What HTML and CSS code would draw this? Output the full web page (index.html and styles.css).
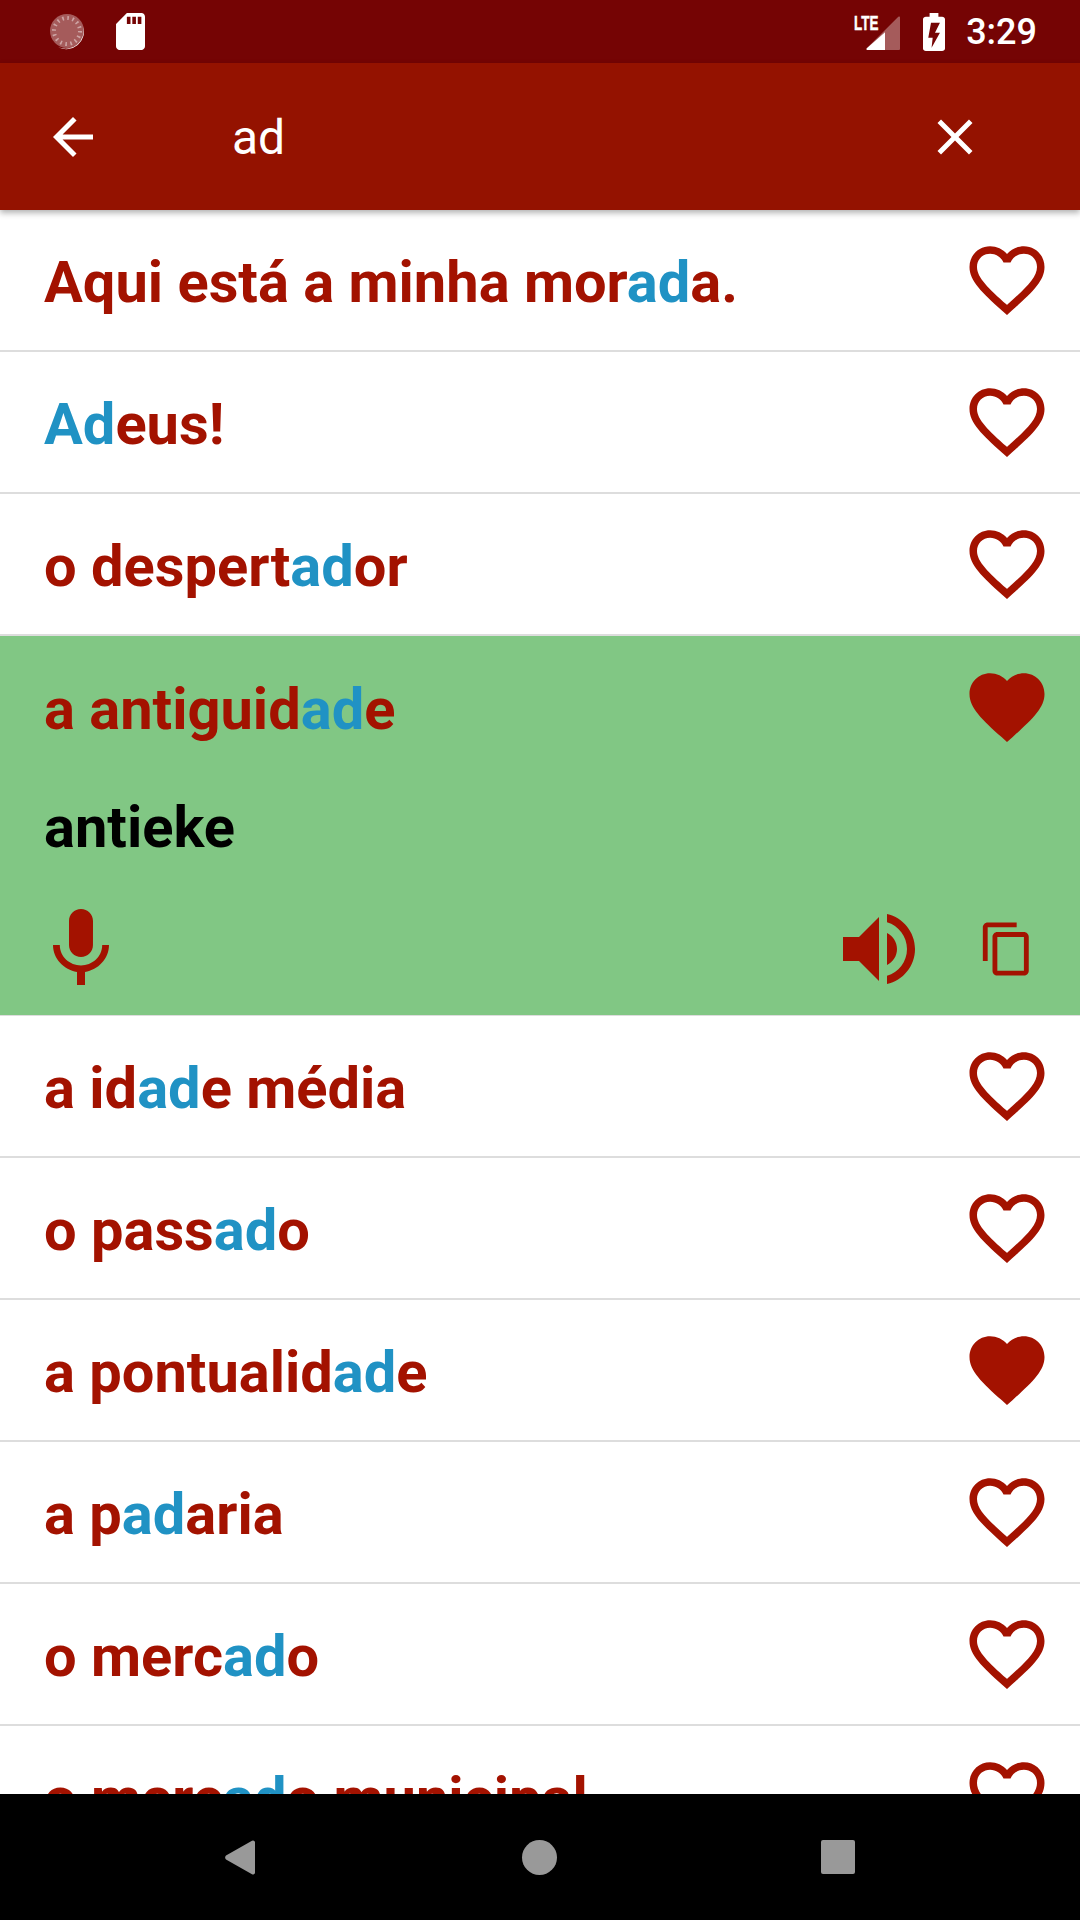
FILE: index.html
```html
<!DOCTYPE html>
<html lang="pt">
<head>
  <meta charset="UTF-8" />
  <meta name="viewport" content="width=device-width, initial-scale=1" />
  <title>Pesquisa</title>
  <link rel="stylesheet" href="styles.css">
</head>
<body>

  <!-- icones usados varias vezes -->
  <svg class="defs" aria-hidden="true">
    <symbol id="heartOutline" viewBox="0 0 24 24"><path d="M16.5 3c-1.74 0-3.41.81-4.5 2.09C10.91 3.81 9.24 3 7.5 3 4.42 3 2 5.42 2 8.5c0 3.78 3.4 6.86 8.55 11.54L12 21.35l1.45-1.32C18.6 15.36 22 12.28 22 8.5 22 5.42 19.58 3 16.5 3zm-4.4 15.55l-.1.1-.1-.1C7.14 14.24 4 11.39 4 8.5 4 6.5 5.5 5 7.5 5c1.54 0 3.04.99 3.57 2.36h1.87C13.46 5.99 14.96 5 16.5 5c2 0 3.5 1.5 3.5 3.5 0 2.89-3.14 5.74-7.9 10.05z"/></symbol>
    <symbol id="heartFull" viewBox="0 0 24 24"><path d="M12 21.35l-1.45-1.32C5.4 15.36 2 12.28 2 8.5 2 5.42 4.42 3 7.5 3c1.74 0 3.41.81 4.5 2.09C13.09 3.81 14.76 3 16.5 3 19.58 3 22 5.42 22 8.5c0 3.78-3.4 6.86-8.55 11.54L12 21.35z"/></symbol>
  </svg>

  <div class="phone">

    <!-- Barra de estado -->
    <div class="statusbar">
      <div class="status-left">
        <svg class="ic-sync" viewBox="0 0 36 36">
          <circle cx="17" cy="17" r="17" fill="#fff" fill-opacity=".35"/>
          <circle cx="17" cy="17" r="13" fill="none" stroke="#fff" stroke-opacity=".45" stroke-width="4" stroke-dasharray="1.6 3.5"/>
          <path d="M33 12a17.500 17.500 0 0 1-25 21a18 18 0 0 0 25-21z" fill="#fff"/>
        </svg>
        <svg class="ic-sd" viewBox="4 2 16 20" preserveAspectRatio="none"><path d="M18 2h-8L4.020 8 4 20c0 1.100.9 2 2 2h12c1.100 0 2-.9 2-2V4c0-1.100-.9-2-2-2zm-6 6h-2V4h2v4zm3 0h-2V4h2v4zm3 0h-2V4h2v4z"/></svg>
      </div>
      <div class="status-right">
        <div class="signal">
          <span class="lte">LTE</span>
          <svg class="ic-signal" viewBox="0 0 48 38">
            <path d="M46 4.500v31.500a1 1 0 0 1-1 1H13.500a1 1 0 0 1-.7-1.700L44.300 3.800a1 1 0 0 1 1.700.7z" fill="#fff" fill-opacity=".35"/>
            <path d="M31 19.300V37H13.500a1 1 0 0 1-.7-1.700z" fill="#fff"/>
          </svg>
        </div>
        <svg class="ic-battery" viewBox="7 2 10 20" preserveAspectRatio="none"><path fill-rule="evenodd" d="M15.670 4H14V2h-4v2H8.330C7.600 4 7 4.600 7 5.330v15.330C7 21.400 7.600 22 8.330 22h7.330c.74 0 1.340-.6 1.340-1.330V5.330C17 4.600 16.400 4 15.670 4zM10.640 7.100H14.700L12.450 12.400H14.700L10.900 20.250 11.400 15H9.400z"/></svg>
        <span class="clock">3:29</span>
      </div>
    </div>

    <!-- Barra de pesquisa -->
    <div class="toolbar">
      <svg class="ic-tool" viewBox="0 0 24 24"><path d="M20 11H7.830l5.590-5.590L12 4l-8 8 8 8 1.410-1.410L7.830 13H20v-2z"/></svg>
      <span class="query">ad</span>
      <svg class="ic-tool" viewBox="0 0 24 24"><path d="M19 6.410L17.590 5 12 10.590 6.410 5 5 6.410 10.590 12 5 17.590 6.410 19 12 13.410 17.590 19 19 17.590 13.410 12z"/></svg>
    </div>

    <!-- Lista de frases -->
    <div class="list">
      <div class="row">
        <span class="phrase">Aqui está a minha mor<span class="hit">ad</span>a.</span>
        <svg class="ic-heart"><use href="#heartOutline"/></svg>
      </div>
      <div class="row">
        <span class="phrase"><span class="hit">Ad</span>eus!</span>
        <svg class="ic-heart"><use href="#heartOutline"/></svg>
      </div>
      <div class="row">
        <span class="phrase">o despert<span class="hit">ad</span>or</span>
        <svg class="ic-heart"><use href="#heartOutline"/></svg>
      </div>

      <div class="open">
        <div class="row row-open">
          <span class="phrase">a antiguid<span class="hit">ad</span>e</span>
          <svg class="ic-heart"><use href="#heartFull"/></svg>
        </div>
        <div class="translation">antieke</div>
        <div class="actions">
          <svg class="ic-action" viewBox="0 0 24 24"><path d="M12 14c1.660 0 2.990-1.340 2.990-3L15 5c0-1.660-1.340-3-3-3S9 3.340 9 5v6c0 1.660 1.340 3 3 3zm5.300-3c0 3-2.540 5.100-5.300 5.100S6.700 14 6.700 11H5c0 3.410 2.720 6.230 6 6.720V21h2v-3.280c3.280-.48 6-3.300 6-6.720h-1.700z"/></svg>
          <svg class="ic-action ic-volume" viewBox="0 0 24 24"><path d="M3 9v6h4l5 5V4L7 9H3zm13.500 3c0-1.770-1.020-3.290-2.500-4.030v8.050c1.480-.73 2.500-2.250 2.500-4.020zM14 3.230v2.060c2.890.86 5 3.540 5 6.710s-2.110 5.850-5 6.710v2.060c4.010-.91 7-4.490 7-8.770s-2.990-7.860-7-8.770z"/></svg>
          <svg class="ic-copy" viewBox="0 0 24 24"><path d="M16 1H4c-1.100 0-2 .9-2 2v14h2V3h12V1zm3 4H8c-1.100 0-2 .9-2 2v14c0 1.100.9 2 2 2h11c1.100 0 2-.9 2-2V7c0-1.100-.9-2-2-2zm0 16H8V7h11v14z"/></svg>
        </div>
      </div>

      <div class="row">
        <span class="phrase">a id<span class="hit">ad</span>e média</span>
        <svg class="ic-heart"><use href="#heartOutline"/></svg>
      </div>
      <div class="row">
        <span class="phrase">o pass<span class="hit">ad</span>o</span>
        <svg class="ic-heart"><use href="#heartOutline"/></svg>
      </div>
      <div class="row">
        <span class="phrase">a pontualid<span class="hit">ad</span>e</span>
        <svg class="ic-heart"><use href="#heartFull"/></svg>
      </div>
      <div class="row">
        <span class="phrase">a p<span class="hit">ad</span>aria</span>
        <svg class="ic-heart"><use href="#heartOutline"/></svg>
      </div>
      <div class="row">
        <span class="phrase">o merc<span class="hit">ad</span>o</span>
        <svg class="ic-heart"><use href="#heartOutline"/></svg>
      </div>
      <div class="row">
        <span class="phrase">o merc<span class="hit">ad</span>o municipal</span>
        <svg class="ic-heart"><use href="#heartOutline"/></svg>
      </div>
    </div>

    <!-- Barra de navegacao -->
    <div class="navbar">
      <svg class="nav-back" viewBox="0 0 30 35"><path d="M27 .8a2 2 0 0 1 3 1.400v30.600a2 2 0 0 1-3 1.400L1 19.500a3 3 0 0 1 0-4z"/></svg>
      <span class="nav-home"></span>
      <span class="nav-square"></span>
    </div>

  </div>

</body>
</html>
```

FILE: styles.css
```css
* {
  box-sizing: border-box;
}

body {
  margin: 0;
  font-family: Roboto, "Liberation Sans", sans-serif;
  background: #ffffff;
}

svg {
  display: block;
  fill: currentColor;
  flex: none;
}

.defs {
  display: none;
}

.phone {
  display: flex;
  flex-direction: column;
  width: 1080px;
  height: 1920px;
  overflow: hidden;
}

/* barra de estado */
.statusbar {
  display: flex;
  justify-content: space-between;
  align-items: center;
  height: 63px;
  background: #750404;
  color: white;
  flex: none;
}

.status-left {
  display: flex;
  align-items: center;
  gap: 30px;
  padding-left: 50px;
}

.status-right {
  display: flex;
  align-items: center;
  padding-right: 43px;
}

.ic-sync {
  width: 36px;
  height: 36px;
}

.ic-sd {
  width: 29px;
  height: 37px;
}

.signal {
  position: relative;
}

.ic-signal {
  width: 48px;
  height: 38px;
}

/* LTE fica por cima do sinal */
.lte {
  position: absolute;
  left: 0;
  top: -1px;
  font-family: "Liberation Sans", sans-serif;
  font-size: 21px;
  line-height: 21px;
  font-weight: bold;
  -webkit-text-stroke: 0.5px white;
  transform: scaleX(0.64);
  transform-origin: left top;
}

.ic-battery {
  width: 22px;
  height: 38px;
  margin-left: 21px;
}

.clock {
  margin-left: 21px;
  font-size: 36px;
  font-weight: 500;
}

/* barra de pesquisa */
.toolbar {
  display: flex;
  align-items: center;
  height: 147px;
  padding: 0 95px 0 43px;
  background: #941200;
  color: white;
  box-shadow: 0 3px 6px rgba(0, 0, 0, 0.3);
  position: relative;
  flex: none;
}

.ic-tool {
  width: 60px;
  height: 60px;
}

.query {
  flex: 1;
  margin-left: 129px;
  padding-top: 2px;
  font-size: 48px;
}

/* lista */
.list {
  flex: 1;
  min-height: 0;
  overflow: hidden;
}

.row {
  display: flex;
  justify-content: space-between;
  align-items: center;
  height: 142px;
  padding: 0 28px 0 44px;
  border-bottom: 2px solid #dddddd;
  color: #a31200;
}

.phrase {
  padding-top: 4px;
  font-size: 57.8px;
  font-weight: bold;
}

.hit {
  color: #2092c4;
}

.ic-heart {
  width: 90px;
  height: 90px;
}

/* linha aberta */
.open {
  height: 380px;
  background: #81c784;
  border-bottom: 1px solid #dddddd;
  color: #a31200;
}

.row-open {
  border-bottom: none;
}

.translation {
  height: 123px;
  padding: 15px 0 0 44px;
  font-size: 57.8px;
  font-weight: bold;
  color: black;
}

.actions {
  display: flex;
  align-items: center;
  padding: 0 44px 0 33px;
}

.ic-action {
  width: 96px;
  height: 96px;
}

.ic-volume {
  margin-left: auto;
}

.ic-copy {
  width: 58px;
  height: 58px;
  margin-left: 51px;
}

/* barra de navegacao */
.navbar {
  display: grid;
  grid-template-columns: repeat(3, 299px);
  justify-content: center;
  justify-items: center;
  align-items: center;
  height: 126px;
  padding-right: 2px;
  background: black;
  color: #999999;
  flex: none;
}

.nav-back {
  width: 30px;
  height: 35px;
}

.nav-home {
  width: 35px;
  height: 35px;
  border-radius: 50%;
  background: #999999;
}

.nav-square {
  width: 34px;
  height: 34px;
  border-radius: 2px;
  background: #999999;
}
```
